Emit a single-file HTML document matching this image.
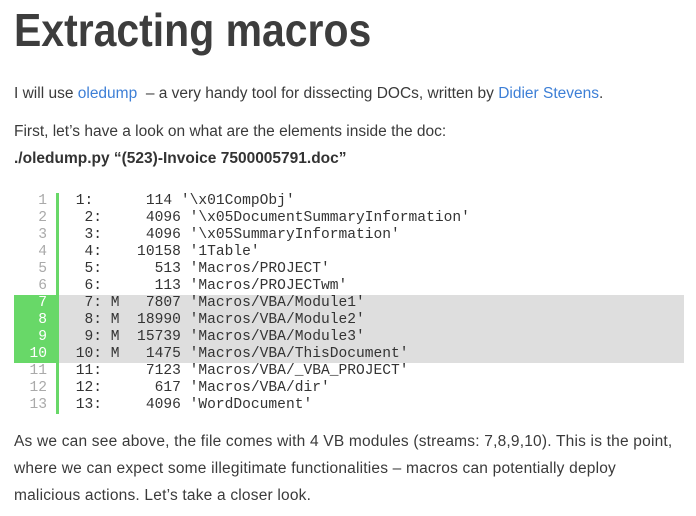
<!DOCTYPE html>
<html><head><meta charset="utf-8"><style>
body{margin:0;width:696px;height:516px;background:#fff;font-family:"Liberation Sans",sans-serif;color:#3a3a3a;overflow:hidden;position:relative}
.t{position:absolute;left:14px;top:3px;font-size:46px;font-weight:bold;color:#3d3d3d;margin:0;transform:scaleX(0.89);transform-origin:left top;white-space:nowrap}
.p{position:absolute;left:14px;font-size:15.5px;white-space:nowrap}
a{color:#3d7fd6;text-decoration:none}
.code{position:absolute;left:0;top:193px;width:696px}
.row{position:relative;height:17px;line-height:17px;font-family:"Liberation Mono",monospace;font-size:14.6px}
.n{position:absolute;left:14px;width:33px;text-align:right;color:#aaa}
.c{position:absolute;left:67px;white-space:pre;color:#333}
.h .n{color:#fff;background:#68d868;width:43px;left:14px;text-align:right;box-sizing:border-box;padding-right:10px}
.h .g{position:absolute;left:59px;width:625px;height:17px;background:#dedede}
.bar{position:absolute;left:56px;top:193px;width:3px;height:221px;background:#68d868}
</style></head><body>
<h1 class="t">Extracting macros</h1>
<div class="p" style="top:85px">I will use <a>oledump</a>&nbsp; – a very handy tool for dissecting DOCs, written by <a>Didier Stevens</a>.</div>
<div class="p" style="top:123px">First, let’s have a look on what are the elements inside the doc:</div>
<div class="p" style="top:150px;font-weight:bold;color:#333">./oledump.py “(523)-Invoice 7500005791.doc”</div>
<div class="code">
<div class="row"><span class="n">1</span><span class="c"> 1:      114 '\x01CompObj'</span></div>
<div class="row"><span class="n">2</span><span class="c">  2:     4096 '\x05DocumentSummaryInformation'</span></div>
<div class="row"><span class="n">3</span><span class="c">  3:     4096 '\x05SummaryInformation'</span></div>
<div class="row"><span class="n">4</span><span class="c">  4:    10158 '1Table'</span></div>
<div class="row"><span class="n">5</span><span class="c">  5:      513 'Macros/PROJECT'</span></div>
<div class="row"><span class="n">6</span><span class="c">  6:      113 'Macros/PROJECTwm'</span></div>
<div class="row h"><span class="g"></span><span class="n">7</span><span class="c">  7: M   7807 'Macros/VBA/Module1'</span></div>
<div class="row h"><span class="g"></span><span class="n">8</span><span class="c">  8: M  18990 'Macros/VBA/Module2'</span></div>
<div class="row h"><span class="g"></span><span class="n">9</span><span class="c">  9: M  15739 'Macros/VBA/Module3'</span></div>
<div class="row h"><span class="g"></span><span class="n">10</span><span class="c"> 10: M   1475 'Macros/VBA/ThisDocument'</span></div>
<div class="row"><span class="n">11</span><span class="c"> 11:     7123 'Macros/VBA/_VBA_PROJECT'</span></div>
<div class="row"><span class="n">12</span><span class="c"> 12:      617 'Macros/VBA/dir'</span></div>
<div class="row"><span class="n">13</span><span class="c"> 13:     4096 'WordDocument'</span></div>
</div>
<div class="bar"></div>
<div class="p" style="top:428px;line-height:27px;letter-spacing:0.2px">As we can see above, the file comes with 4 VB modules (streams: 7,8,9,10). This is the point,<br>where we can expect some illegitimate functionalities – macros can potentially deploy<br>malicious actions. Let’s take a closer look.</div>
</body></html>
